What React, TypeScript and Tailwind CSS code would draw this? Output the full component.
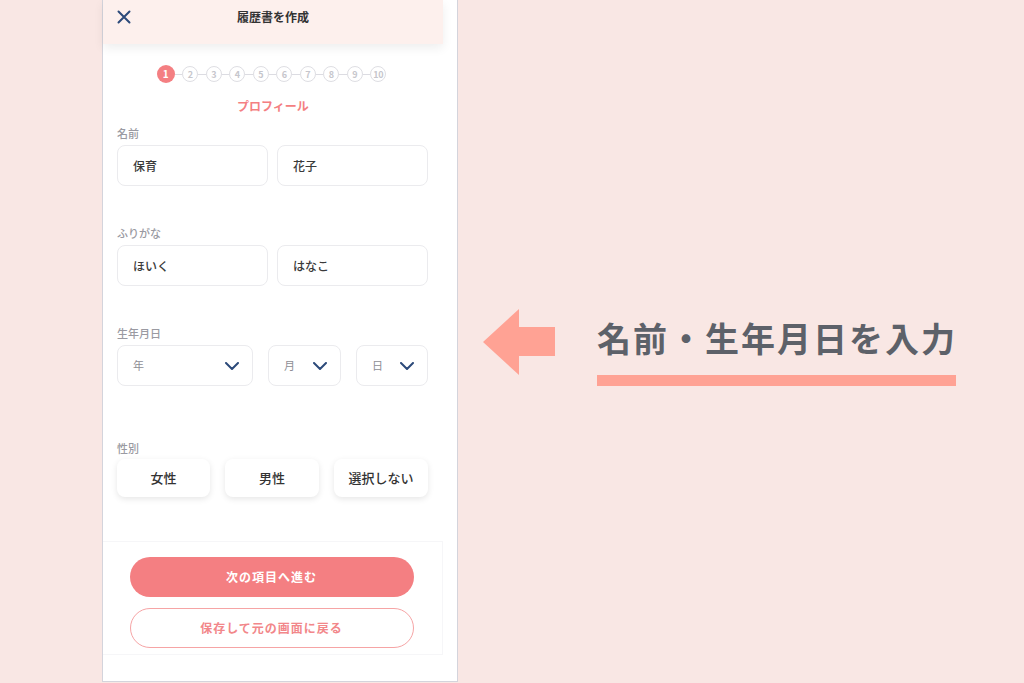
import React from "react";

const jp = { fontFamily: '"Noto Sans CJK JP", "Noto Sans", sans-serif' };

function Steps() {
  const items = [];
  for (let i = 1; i <= 10; i++) {
    if (i > 1) items.push(<div key={"l" + i} className="w-[7.5px] h-[1px] bg-[#dcdce2]" />);
    if (i === 1) {
      items.push(
        <div key={i} className="w-[18px] h-[18px] rounded-full bg-[#f47f82] flex items-center justify-center text-white text-[10px] font-bold leading-none">
          1
        </div>
      );
    } else {
      items.push(
        <div key={i} className="w-[16px] h-[16px] rounded-full border-[1.5px] border-[#dedee3] flex items-center justify-center text-[#c6c6cc] text-[9px] font-bold leading-none tracking-[-0.3px]">
          {i}
        </div>
      );
    }
  }
  return <div className="flex items-center justify-center h-[18px] mt-[21px] pr-[3px]">{items}</div>;
}

function Chevron() {
  return (
    <svg width="14" height="8" viewBox="0 0 14 8" fill="none">
      <path d="M1 1l6 6 6-6" stroke="#2c4a7a" strokeWidth="2" strokeLinecap="round" strokeLinejoin="round" />
    </svg>
  );
}

function Label({ children }: { children: React.ReactNode }) {
  return <div className="h-[14px] text-[11px] leading-[14px] text-[#9a9aa2] font-medium">{children}</div>;
}

function Input({ value }: { value: string }) {
  return (
    <div className="w-[151px] h-[41px] rounded-[8px] border border-[#ebebee] bg-white flex items-center pl-[15px] text-[12px] font-medium text-[#3a3a3a]">
      {value}
    </div>
  );
}

function Select({ label, w, gap }: { label: string; w: string; gap: string }) {
  return (
    <div className={`${w} h-[41px] rounded-[8px] border border-[#ebebee] bg-white flex items-center pl-[15px] text-[11px] text-[#8e8e94]`}>
      <span>{label}</span>
      <span className={gap}>
        <Chevron />
      </span>
    </div>
  );
}

function Gender({ label, w }: { label: string; w: string }) {
  return (
    <div className={`${w} h-[38px] rounded-[8px] bg-white shadow-[0_2px_6px_rgba(0,0,0,0.10)] flex items-center justify-center text-[13px] font-medium text-[#333]`}>
      {label}
    </div>
  );
}

export default function App() {
  return (
    <div className="w-[1024px] h-[683px] bg-[#f9e7e4] flex overflow-hidden" style={jp}>
      {/* Phone */}
      <div className="ml-[102px] w-[356px] h-[682px] bg-white border-l border-r border-b border-[#d4d4dc] flex">
        <div className="w-[340px] flex flex-col">
          {/* Header */}
          <div className="h-[44px] bg-[#fdf0ed] shadow-[0_4px_10px_rgba(0,0,0,0.07)] flex items-center pb-[10px] relative z-10">
            <div className="pl-[14px] w-[40px] flex">
              <svg width="14" height="14" viewBox="0 0 14 14" fill="none">
                <path d="M1.5 1.5l11 11M12.5 1.5l-11 11" stroke="#2c4a7a" strokeWidth="2" strokeLinecap="round" />
              </svg>
            </div>
            <div className="flex-1 text-center text-[12px] font-bold text-[#333] pr-[40px]">履歴書を作成</div>
          </div>

          <Steps />
          <div className="mt-[15px] h-[16px] text-center text-[12px] leading-[16px] font-bold text-[#f47f82]">プロフィール</div>

          <div className="px-[14px] flex flex-col">
            <div className="mt-[12px]">
              <Label>名前</Label>
              <div className="mt-[5px] flex gap-[9px]">
                <Input value="保育" />
                <Input value="花子" />
              </div>
            </div>

            <div className="mt-[40px]">
              <Label>ふりがな</Label>
              <div className="mt-[5px] flex gap-[9px]">
                <Input value="ほいく" />
                <Input value="はなこ" />
              </div>
            </div>

            <div className="mt-[40px]">
              <Label>生年月日</Label>
              <div className="mt-[5px] flex gap-[15px]">
                <Select label="年" w="w-[136px]" gap="ml-[81px]" />
                <Select label="月" w="w-[73px]" gap="ml-[18px]" />
                <Select label="日" w="w-[72px]" gap="ml-[17px]" />
              </div>
            </div>

            <div className="mt-[55px]">
              <Label>性別</Label>
              <div className="mt-[4px] flex gap-[15px]">
                <Gender label="女性" w="w-[93px]" />
                <Gender label="男性" w="w-[94px]" />
                <Gender label="選択しない" w="w-[94px]" />
              </div>
            </div>
          </div>

          {/* Footer */}
          <div className="mt-[44px] border-t border-r border-b border-[#f6f6f8] bg-white pt-[15px] pb-[6px] flex flex-col items-center pr-[2px]">
            <div className="w-[284px] h-[40px] rounded-full bg-[#f47f82] flex items-center justify-center text-white text-[12px] font-bold tracking-[1px]">
              次の項目へ進む
            </div>
            <div className="mt-[11px] w-[284px] h-[40px] rounded-full border-[1.5px] border-[#f6a4a5] bg-white flex items-center justify-center text-[#f2878a] text-[12px] font-bold tracking-[1px]">
              保存して元の画面に戻る
            </div>
          </div>
        </div>
        <div className="flex-1 bg-white" />
      </div>

      {/* Annotation */}
      <div className="flex items-start pt-[309px]">
        <svg className="ml-[25px]" width="72" height="66" viewBox="0 0 72 66" fill="none">
          <polygon points="0,33 36,0 36,18 72,18 72,47 36,47 36,66" fill="#ffa294" />
        </svg>
        <div className="ml-[42px] mt-[9px] flex flex-col">
          <div className="h-[40px] leading-[40px] text-[34px] font-bold text-[#5d6169] tracking-[2px] whitespace-nowrap">
            名前・生年月日を入力
          </div>
          <div className="mt-[17px] w-[359px] h-[11px] bg-[#ffa294]" />
        </div>
      </div>
    </div>
  );
}
